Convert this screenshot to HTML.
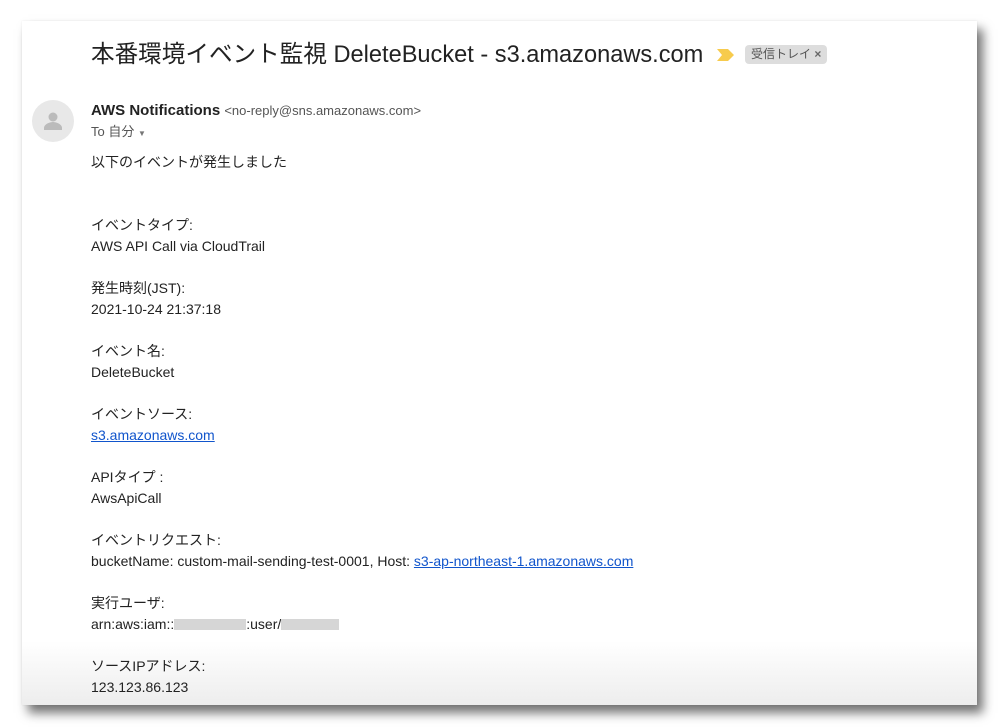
<!DOCTYPE html>
<html><head><meta charset="utf-8"><style>
html,body{margin:0;padding:0;background:#fff;width:1000px;height:727px;overflow:hidden}
body{font-family:"Liberation Sans","Noto Sans CJK JP",sans-serif;color:#222;position:relative}
.card{position:absolute;left:22px;top:21px;width:955px;height:684px;background:linear-gradient(#fff 0,#fff 620px,#ededed 684px);box-shadow:6px 8px 10px rgba(0,0,0,.55),0 0 2px rgba(0,0,0,.08)}
.title{position:absolute;left:91px;top:40px;font-size:23.6px;color:#222;white-space:nowrap;line-height:30px}
.tag{position:absolute;left:745px;top:45px;background:#ddd;border-radius:4px;font-size:12px;color:#555;padding:0 6px;height:19px;line-height:19px}
.av{position:absolute;left:32px;top:100px;width:42px;height:42px;border-radius:50%;background:#e8e8e8}
.from{position:absolute;left:91px;top:102px;font-size:15px;line-height:17px;white-space:nowrap}
.to{position:absolute;left:91px;top:124px;font-size:13px;color:#555;line-height:16px}
.body{position:absolute;left:91px;top:152px;font-size:14px;line-height:21px;white-space:nowrap}
a{color:#15c;text-decoration:underline}
.blur{display:inline-block;height:11px;background:#d6d6d6;vertical-align:-1px}
</style></head><body>
<div class="card"></div>
<div class="title">本番環境イベント監視 DeleteBucket - s3.amazonaws.com</div>
<svg style="position:absolute;left:716px;top:48px" width="20" height="14" viewBox="0 0 20 14"><path d="M1 1h11l6 6-6 6H1l5-6z" fill="#f7cb4d"/></svg>
<div class="tag">受信トレイ <b style="color:#666">×</b></div>
<div class="av"><svg width="42" height="42" viewBox="0 0 42 42"><circle cx="21" cy="17" r="4.5" fill="#bbb"/><path d="M12 28c0-4 6-6 9-6s9 2 9 6v2H12z" fill="#bbb"/></svg></div>
<div class="from"><b>AWS Notifications</b> <span style="font-size:13px;color:#555">&lt;no-reply@sns.amazonaws.com&gt;</span></div>
<div class="to">To 自分 <span style="font-size:8px;color:#777">▼</span></div>
<div class="body">以下のイベントが発生しました<br><br><br>
イベントタイプ:<br>AWS API Call via CloudTrail<br><br>
発生時刻(JST):<br>2021-10-24 21:37:18<br><br>
イベント名:<br>DeleteBucket<br><br>
イベントソース:<br><a>s3.amazonaws.com</a><br><br>
APIタイプ :<br>AwsApiCall<br><br>
イベントリクエスト:<br>bucketName: custom-mail-sending-test-0001, Host: <a>s3-ap-northeast-1.amazonaws.com</a><br><br>
実行ユーザ:<br>arn:aws:iam::<span class="blur" style="width:72px"></span>:user/<span class="blur" style="width:58px"></span><br><br>
ソースIPアドレス:<br>123.123.86.123</div>
</body></html>
